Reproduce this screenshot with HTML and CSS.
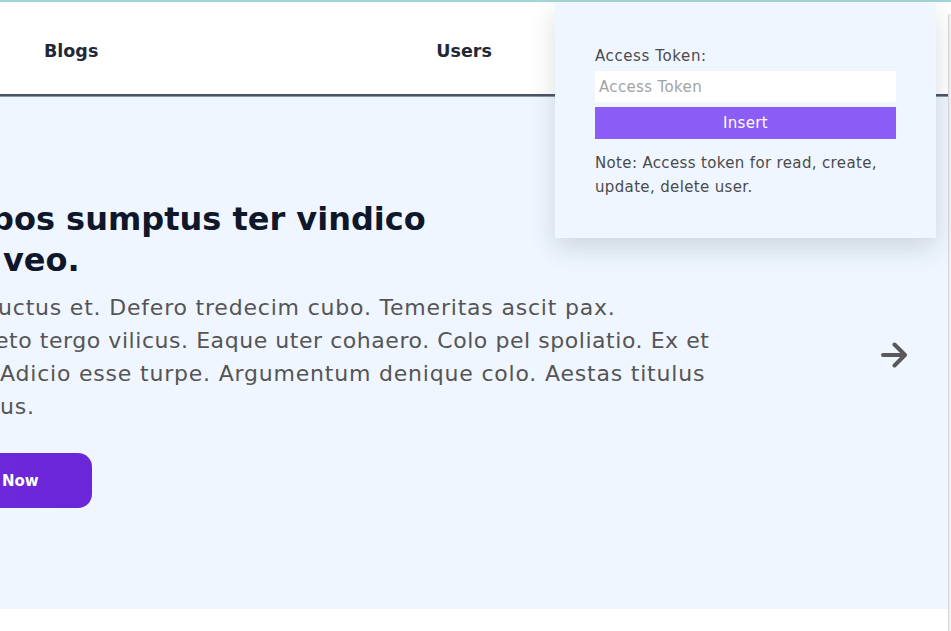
FILE: index.html
```html
<!DOCTYPE html>
<html lang="en">
<head>
<meta charset="utf-8">
<title>Blogs</title>
<link rel="stylesheet" href="styles.css">
</head>
<body>
<div class="page">
  <div class="main">
    <header class="header">
      <nav class="nav">
        <a class="nav-link nav-blogs" href="#">Blogs</a>
        <a class="nav-link" href="#">Users</a>
      </nav>
    </header>
    <section class="hero">
      <div class="slide">
        <h1 class="hero-title">
          <span class="ln ln-h1">bos sumptus ter vindico</span>
          <span class="ln ln-h2">veo.</span>
        </h1>
        <p class="hero-text">
          <span class="ln ln-p1">uctus et. Defero tredecim cubo. Temeritas ascit pax.</span>
          <span class="ln ln-p2">eto tergo vilicus. Eaque uter cohaero. Colo pel spoliatio. Ex et</span>
          <span class="ln ln-p3">Adicio esse turpe. Argumentum denique colo. Aestas titulus</span>
          <span class="ln ln-p4">us.</span>
        </p>
        <a class="cta" href="#">Now</a>
      </div>
      <button class="next" aria-label="Next">
        <svg width="29" height="26" viewBox="0 0 29 26"><path d="M3 13H25M14.5 2.5L25 13L14.5 23.5" fill="none" stroke="#595959" stroke-width="4" stroke-linecap="round" stroke-linejoin="round"/></svg>
      </button>
    </section>
    <div class="below"></div>
  </div>
  <div class="track"></div>
</div>

<div class="token-panel">
  <label class="token-label" for="token">Access Token:</label>
  <input class="token-input" id="token" type="text" placeholder="Access Token">
  <button class="token-btn">Insert</button>
  <p class="token-note">Note: Access token for read, create, update, delete user.</p>
</div>
</body>
</html>
```
FILE: styles.css
```css
* { box-sizing: border-box; }
html, body { margin: 0; padding: 0; }
body {
  font-family: "DejaVu Sans", "Open Sans", sans-serif;
  background: #ffffff;
  overflow: hidden;
  height: 631px;
  border-top: 2px solid #a3d6d9;
}
.page {
  display: flex;
  height: 629px;
}
.main {
  flex: 1;
  display: flex;
  flex-direction: column;
  min-width: 0;
}
.track {
  width: 3px;
  margin-top: 12px;
  background: #f1f1f1;
  border-left: 1px solid #d6d6d6;
}
.header {
  height: 94px;
  background: #ffffff;
  border-top: 1px solid #ffffff;
  border-bottom: 2px solid #4a5466;
  box-shadow: 0 1px 0 #8a95a6;
  position: relative;
  z-index: 1;
}
.nav {
  display: flex;
  align-items: center;
  height: 100%;
  padding-left: 44px;
  padding-top: 4px;
}
.nav-link {
  font-size: 17.5px;
  font-weight: 700;
  color: #1f2937;
  text-decoration: none;
}
.nav-blogs { margin-right: 338px; }
.hero {
  height: 512px;
  margin-top: 1px;
  background: #eff6ff;
  display: flex;
  align-items: center;
  overflow: hidden;
}
.slide {
  flex: 1;
  display: flex;
  flex-direction: column;
  align-items: flex-start;
  padding-top: 1px;
}
.ln { display: block; white-space: nowrap; }
.hero-title {
  margin: 0 0 10px;
  font-size: 32px;
  line-height: 41px;
  font-weight: 700;
  color: #0f172a;
}
.ln-h1 { margin-left: -9px; }
.ln-h2 { margin-left: 3px; }
.hero-text {
  margin: 0 0 30px;
  font-size: 22px;
  line-height: 33px;
  letter-spacing: 0.8px;
  color: #555555;
}
.ln-p1 { margin-left: -2px; }
.ln-p2 { margin-left: -5px; letter-spacing: 0.55px; }
.ln-p3 { margin-left: 0; }
.cta {
  display: flex;
  align-items: center;
  height: 55px;
  margin-left: -30px;
  padding: 0 53px 0 32px;
  border-radius: 14px;
  background: linear-gradient(90deg, #6d28d9, #6a26d8);
  color: #ffffff;
  font-size: 15px;
  font-weight: 700;
  text-decoration: none;
}
.next {
  flex: none;
  margin-right: 39px;
  margin-top: 3px;
  padding: 0;
  border: 0;
  background: none;
  display: flex;
}
.below { flex: 1; background: #ffffff; }

.token-panel {
  position: absolute;
  left: 555px;
  top: 3px;
  width: 381px;
  height: 235px;
  padding: 43px 40px 0;
  background: #eff6ff;
  box-shadow: 0 10px 25px rgba(30, 41, 59, 0.16);
  z-index: 5;
  letter-spacing: 0.35px;
}
.token-label {
  display: block;
  font-size: 15px;
  line-height: 20px;
  letter-spacing: 0.6px;
  color: #4b4b4b;
  margin-bottom: 5px;
}
.token-input {
  display: block;
  width: 301px;
  height: 31px;
  border: 0;
  padding: 0 4px;
  margin: 0 0 5px;
  font-family: inherit;
  font-size: 15px;
  letter-spacing: 0.35px;
  color: #333;
  background: #ffffff;
  outline: none;
}
.token-input::placeholder { color: #a3a3a3; }
.token-btn {
  display: block;
  width: 301px;
  height: 32px;
  border: 0;
  padding: 0;
  background: #8b5cf6;
  color: #ffffff;
  font-family: inherit;
  font-size: 15px;
  letter-spacing: 0.35px;
}
.token-note {
  margin: 12px 0 0;
  font-size: 15px;
  line-height: 24px;
  color: #4b4b4b;
}
```
